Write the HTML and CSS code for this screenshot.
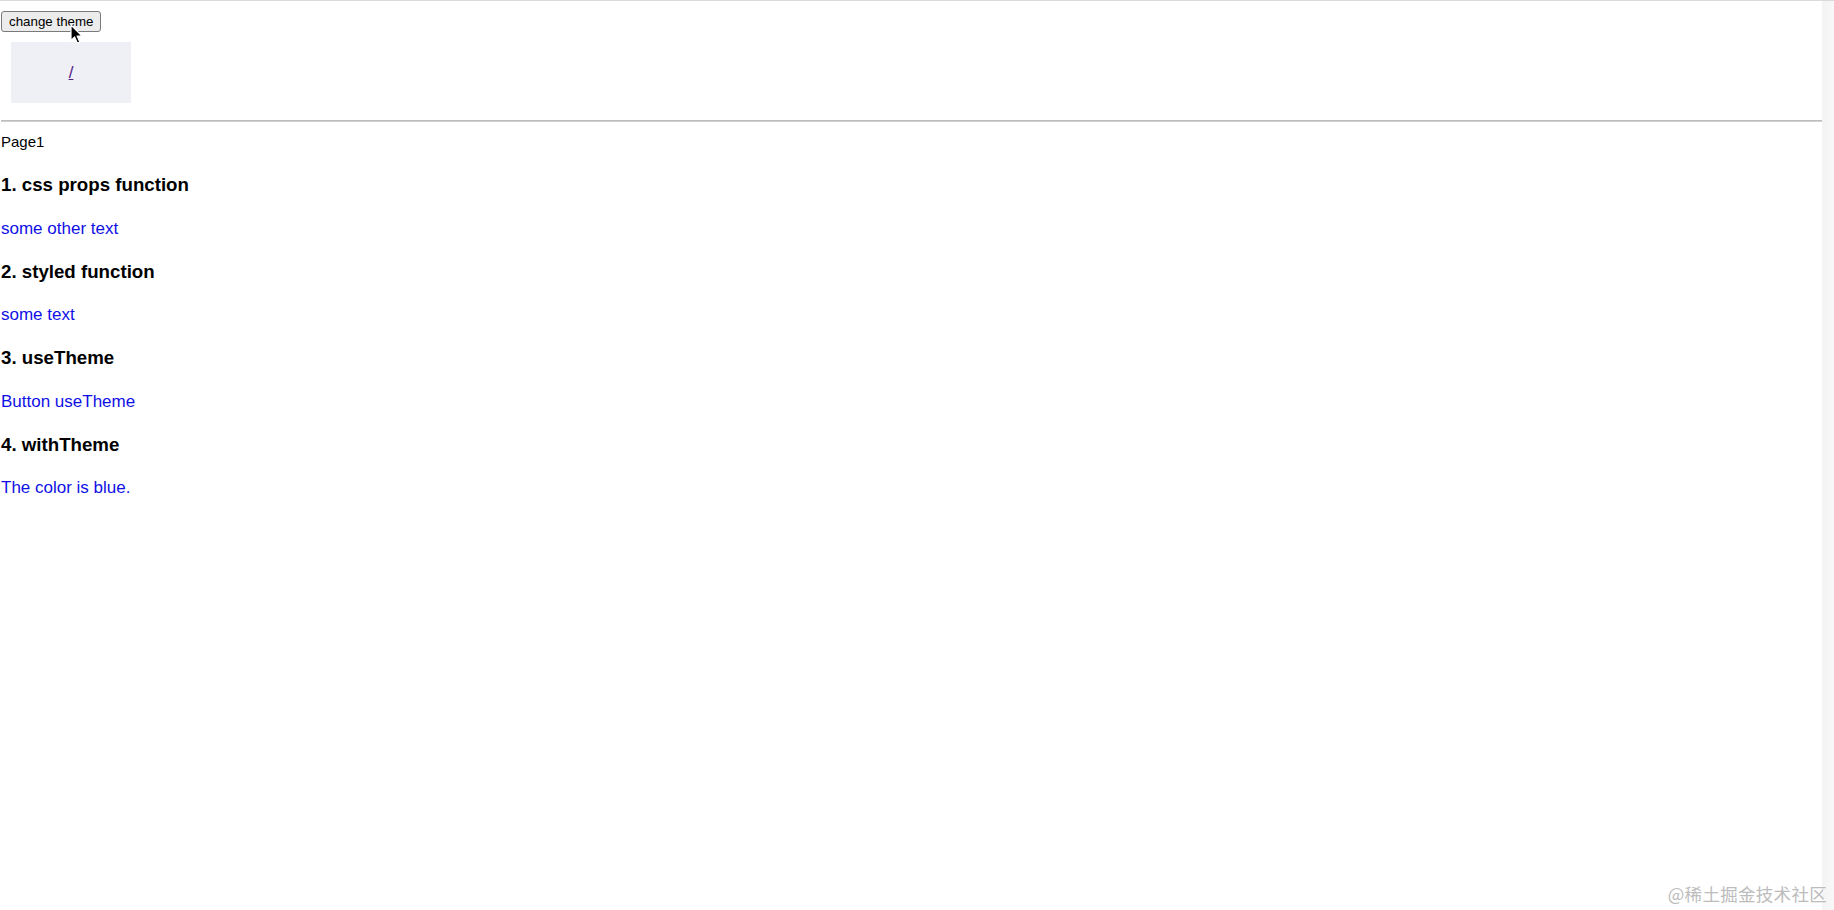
FILE: index.html
```html
<!DOCTYPE html>
<html lang="en">
<head>
<meta charset="utf-8">
<title>Page1</title>
<link rel="stylesheet" href="styles.css">
</head>
<body>
<div class="window">
  <div class="main">
    <div class="top">
      <button class="btn" type="button">change theme</button>
      <div class="box"><a class="link" href="#">/</a></div>
    </div>
    <hr class="rule">
    <div class="page">Page1</div>
    <h3 class="title">1. css props function</h3>
    <p class="blue">some other text</p>
    <h3 class="title">2. styled function</h3>
    <p class="blue">some text</p>
    <h3 class="title">3. useTheme</h3>
    <p class="blue">Button useTheme</p>
    <h3 class="title">4. withTheme</h3>
    <p class="blue">The color is blue.</p>
  </div>
  <div class="gutter"></div>
</div>
<svg class="cursor" width="14" height="21" viewBox="0 0 14 21" aria-hidden="true">
  <path d="M1 1 L1 16.5 L4.6 13 L7.4 19.2 L9.8 18.1 L7.1 12.1 L12 12.1 Z" fill="#000" stroke="#fff" stroke-width="1.2" stroke-linejoin="round"/>
</svg>
<div class="watermark">@稀土掘金技术社区</div>
</body>
</html>
```

FILE: styles.css
```css
html, body {
  margin: 0;
  padding: 0;
  height: 100%;
  background: #ffffff;
}

body {
  font-family: "Liberation Sans", Arial, Helvetica, sans-serif;
  font-size: 16px;
  color: #000;
  position: relative;
  overflow: hidden;
}

.window {
  display: flex;
  height: 100%;
  box-sizing: border-box;
  border-top: 1px solid #dadada;
}

.main {
  flex: 1;
  padding-left: 1px;
}

.gutter {
  width: 12px;
  background: linear-gradient(to right, #f3f3f3, #f8f8f8);
}

.top {
  display: flex;
  flex-direction: column;
  align-items: flex-start;
}

.btn {
  margin: 10px 0 0 0;
  font-family: "Liberation Sans", Arial, sans-serif;
  font-size: 13.33px;
  line-height: 15px;
  padding: 2px 7px;
  color: #000;
  background: #ececec;
  border: 1px solid #7a7a7a;
  border-radius: 3px;
}

.box {
  margin: 10px 0 0 10px;
  width: 120px;
  height: 61px;
  background: #eff0f6;
  display: flex;
  align-items: center;
  justify-content: center;
}

.link {
  color: #551a8b;
  text-decoration: underline;
  font-size: 17px;
  line-height: 22px;
}

.rule {
  margin: 17px 0 9px 0;
  height: 0;
  border: none;
  border-top: 1px solid #bdbdbd;
  border-bottom: 1px solid #cfcfcf;
}

.page {
  font-size: 15px;
  line-height: 22px;
}

.title {
  font-size: 18.7px;
  font-weight: bold;
  line-height: 28px;
  margin: 18.3px 0;
}

.blue {
  color: #1010e6;
  font-size: 17px;
  line-height: 22px;
  margin: 18.3px 0;
}

.cursor {
  position: absolute;
  left: 70px;
  top: 24px;
}

.watermark {
  position: absolute;
  right: 7px;
  bottom: 4px;
  font-family: "Noto Sans CJK SC", "Liberation Serif", serif;
  font-size: 17.5px;
  line-height: 24px;
  color: #bcbcbc;
  letter-spacing: 0.3px;
}
```
